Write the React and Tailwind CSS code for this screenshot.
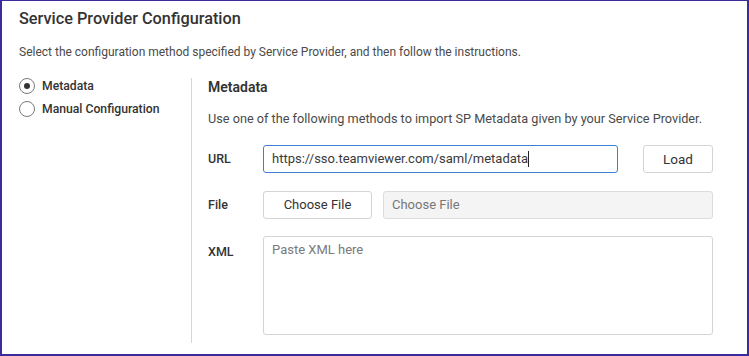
export default function App() {
  return (
    <div className="w-[749px] h-[356px] bg-white border-x-2 border-t border-b-2 border-[#3a2c9c] overflow-hidden font-['Roboto',_'Liberation_Sans',_sans-serif] text-[#3c3c3c]">
      <div className="pl-[17px] pt-[6px]">
        <h1 className="text-[16.3px] leading-[24px] font-medium text-[#333]">Service Provider Configuration</h1>
        <p className="mt-[12px] text-[12px] leading-[18px] text-[#4a4a4a]">
          Select the configuration method specified by Service Provider, and then follow the instructions.
        </p>
        <div className="mt-[17px] flex">
          <div className="w-[172px] flex flex-col gap-[7px]">
            <label className="flex items-center h-[16px] gap-[7px] text-[12.2px] font-medium text-[#333]">
              <span className="w-[16px] h-[16px] rounded-full border border-[#7a7a7a] flex items-center justify-center">
                <span className="w-[6px] h-[6px] rounded-full bg-[#333]" />
              </span>
              Metadata
            </label>
            <label className="flex items-center h-[16px] gap-[7px] text-[12.2px] font-medium text-[#333]">
              <span className="w-[16px] h-[16px] rounded-full border border-[#7a7a7a]" />
              Manual Configuration
            </label>
          </div>
          <div className="border-l border-[#d6d6d6] pl-[16px] pt-px pb-[8px] w-[540px]">
            <h2 className="text-[14px] leading-[16px] font-semibold text-[#333]">Metadata</h2>
            <p className="mt-[15px] text-[12.7px] leading-[18px] text-[#4a4a4a]">
              Use one of the following methods to import SP Metadata given by your Service Provider.
            </p>
            <div className="mt-[17px] flex items-center">
              <span className="w-[55px] text-[12.5px] font-medium text-[#333]">URL</span>
              <div className="w-[355px] h-[28px] rounded-[3px] border border-[#3d7fd0] flex items-center pl-[8px] text-[13px] text-[#3a3a3a]">
                https://sso.teamviewer.com/saml/metadata<span className="w-px h-[16px] bg-[#222]" />
              </div>
              <button className="ml-[25px] w-[70px] h-[28px] rounded-[3px] border border-[#d4d4d4] bg-white text-[13.5px] text-[#333]">Load</button>
            </div>
            <div className="mt-[18px] flex items-center">
              <span className="w-[55px] text-[12.5px] font-medium text-[#333]">File</span>
              <button className="w-[109px] h-[28px] rounded-[3px] border border-[#d4d4d4] bg-white text-[13px] text-[#333]">Choose File</button>
              <div className="ml-[11px] w-[330px] h-[28px] rounded-[3px] border border-[#dcdcdc] bg-[#f4f4f4] flex items-center pl-[8px] text-[13px] text-[#777]">
                Choose File
              </div>
            </div>
            <div className="mt-[17px] flex items-start">
              <span className="w-[55px] pt-[7px] text-[12.5px] leading-[18px] font-medium text-[#333]">XML</span>
              <div className="w-[450px] h-[99px] rounded-[3px] border border-[#d4d4d4] pl-[8px] pt-[4px] text-[13px] leading-[18px] text-[#7a7a7a]">
                Paste XML here
              </div>
            </div>
          </div>
        </div>
      </div>
    </div>
  );
}
